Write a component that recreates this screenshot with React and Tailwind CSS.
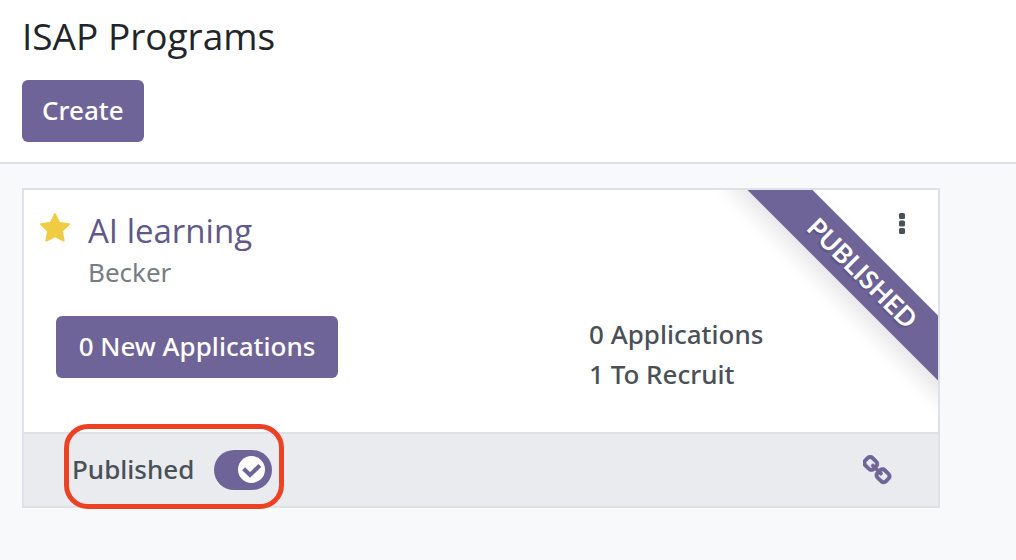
const STAR =
  "M1664 647q0 22-26 48l-363 354 86 500q1 7 1 20 0 21-10.5 35.5t-30.5 14.5q-19 0-40-12l-449-236-449 236q-22 12-40 12-21 0-31.5-14.5t-10.5-35.5q0-6 2-20l86-500-364-354q-25-27-25-48 0-37 56-46l502-73 225-455q19-41 49-41t49 41l225 455 502 73q56 9 56 46z";
const LINK =
  "M1456 1216q0-40-28-68l-208-208q-28-28-68-28-42 0-72 32 3 3 19 18.5t21.5 21.5 15 19 13 25.5 3.5 27.5q0 40-28 68t-68 28q-15 0-27.5-3.5t-25.5-13-19-15-21.5-21.5-18.5-19q-33 31-33 73 0 40 28 68l206 207q27 27 68 27 40 0 68-26l147-146q28-28 28-67zm-703-705q0-40-28-68l-206-207q-28-28-68-28-39 0-68 27l-147 146q-28 28-28 67 0 40 28 68l208 208q27 27 68 27 42 0 72-31-3-3-19-18.5t-21.5-21.5-15-19-13-25.5-3.5-27.5q0-40 28-68t68-28q15 0 27.5 3.5t25.5 13 19 15 21.5 21.5 18.5 19q33-31 33-73zm895 705q0 120-85 203l-147 146q-83 83-203 83-121 0-204-85l-206-207q-83-83-83-203 0-123 88-209l-88-88q-86 88-208 88-120 0-204-84l-208-208q-84-84-84-204t85-203l147-146q83-83 203-83 121 0 204 85l206 207q83 83 83 203 0 123-88 209l88 88q86-88 208-88 120 0 204 84l208 208q84 84 84 204z";

function Ribbon({ children }) {
  return (
    <div className="pointer-events-none absolute top-0 right-0 h-[242px] w-[260px] overflow-hidden">
      <div className="absolute top-[59px] -right-[84px] flex h-[46px] w-80 rotate-45 items-center justify-center bg-[#6f6498] pl-[2px] font-['Lato',sans-serif] text-[26px] font-bold text-white uppercase shadow-[0_10px_20px_rgba(0,0,0,0.1)] [text-shadow:0_2px_2px_rgba(0,0,0,0.2)]">
        {children}
      </div>
    </div>
  );
}

function PrimaryButton({ children, className = "" }) {
  return (
    <button
      type="button"
      className={`h-[62px] rounded-md bg-[#6f6498] px-5 pb-[2px] font-['Noto_Sans',sans-serif] text-[26px] font-medium text-white ${className}`}
    >
      {children}
    </button>
  );
}

function ProgramCard() {
  return (
    <article className="relative mr-[76px] border-2 border-[#dee2e6] bg-white">
      <Ribbon>Published</Ribbon>
      <button type="button" aria-label="More options" className="absolute top-4 right-6 flex h-9 w-6 items-center justify-center">
        <svg viewBox="0 0 6 22" className="h-[22px] w-[6px] fill-[#495057]" aria-hidden="true">
          <rect y="0" width="6" height="6" rx="1.5" />
          <rect y="7.5" width="6" height="6" rx="1.5" />
          <rect y="15" width="6" height="6" rx="1.5" />
        </svg>
      </button>
      <div className="flex gap-[18px] px-4 pt-5">
        <button type="button" aria-label="Favorite" className="mt-[3px] h-[30px] w-[30px] shrink-0">
          <svg viewBox="0 64 1664 1600" className="h-full w-full fill-[#efcc42]" aria-hidden="true">
            <path d={STAR} />
          </svg>
        </button>
        <div>
          <h2 className="text-[33px] leading-[42px] font-medium">
            <a href="#program" className="text-[#5f5889]">AI learning</a>
          </h2>
          <p className="font-['Noto_Sans',sans-serif] text-[26px] leading-10 text-[#767c82]">Becker</p>
        </div>
      </div>
      <div className="flex gap-4 px-8 pt-[22px] pb-[38px]">
        <div className="basis-[517px] pt-[2px]">
          <PrimaryButton className="min-w-[282px]">0 New Applications</PrimaryButton>
        </div>
        <div className="font-['Noto_Sans',sans-serif] text-[26px] leading-10 font-medium text-[#495057]">
          <p>0 Applications</p>
          <p>1 To Recruit</p>
        </div>
      </div>
      <footer className="relative flex h-[74px] items-center justify-between border-t-2 border-[#dee2e6] bg-[#e9ebef] pr-[45px] pl-12">
        <div className="flex items-center gap-5">
          <label htmlFor="published" className="pb-[2px] font-['Noto_Sans',sans-serif] text-[26px] font-medium text-[#495057]">Published</label>
          <span className="relative flex">
            <input id="published" type="checkbox" defaultChecked className="h-10 w-[58px] cursor-pointer appearance-none rounded-full bg-[#adb5bd] checked:bg-[#6f6498]" />
            <svg viewBox="0 0 26 26" className="pointer-events-none absolute top-[6px] right-[7px] h-[27px] w-[27px]" aria-hidden="true">
              <circle cx="13" cy="13" r="13" fill="#fff" />
              <path d="M5.4 12.2l6.2 6 9.4-9" fill="none" stroke="#6f6498" strokeWidth="4" />
            </svg>
          </span>
        </div>
        <a href="#link" aria-label="Open link">
          <svg viewBox="80 0 1632 1712" className="h-[30px] w-[30px] fill-[#6f6498] stroke-[#6f6498] stroke-[40]" aria-hidden="true">
            <path d={LINK} />
          </svg>
        </a>
        <div className="pointer-events-none absolute -top-[10px] left-10 h-[85px] w-[220px] rounded-[24px] border-[5px] border-[#ee4023]" />
      </footer>
    </article>
  );
}

export default function App() {
  return (
    <div className="min-h-screen bg-[#f8f9fb] font-['Open_Sans','Noto_Sans',sans-serif]">
      <header className="border-b-2 border-[#dee2e6] bg-white px-[22px] pt-[10px] pb-5">
        <h1 className="text-[37px] leading-[52px] font-medium text-[#212529]">ISAP Programs</h1>
        <PrimaryButton className="mt-[18px]">Create</PrimaryButton>
      </header>
      <main className="pt-6 pb-12 pl-[22px]">
        <ProgramCard />
      </main>
    </div>
  );
}
